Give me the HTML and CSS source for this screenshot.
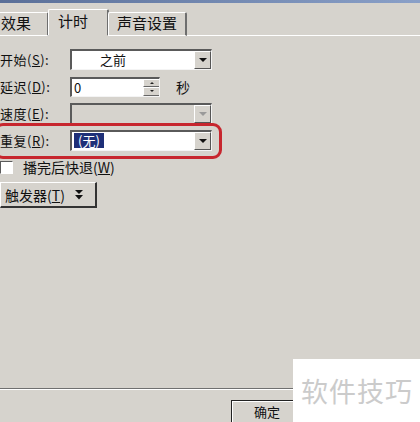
FILE: index.html
```html
<!DOCTYPE html>
<html lang="zh-CN">
<head>
    <meta charset="UTF-8">
    <title>计时</title>
    <link rel="stylesheet" href="styles.css">
</head>
<body>

<div class="titlebar"></div>

<div class="tabs">
    <div class="tab tab-first">效果</div>
    <div class="tab tab-active">计时</div>
    <div class="tab">声音设置</div>
    <div class="tab-rest"></div>
</div>

<div class="panel">
    <div class="row">
        <label class="label">开始(<u>S</u>):</label>
        <div class="combo">
            <span class="combo-text centered">之前</span>
            <span class="drop"><span class="arrow"></span></span>
        </div>
    </div>

    <div class="row">
        <label class="label">延迟(<u>D</u>):</label>
        <div class="spin">
            <span class="spin-text">0</span>
            <span class="spin-btns">
                <span class="spin-btn"><span class="arrow-up"></span></span>
                <span class="spin-btn"><span class="arrow-small"></span></span>
            </span>
        </div>
        <span class="unit">秒</span>
    </div>

    <div class="row">
        <label class="label">速度(<u>E</u>):</label>
        <div class="combo disabled">
            <span class="combo-text"></span>
            <span class="drop"><span class="arrow"></span></span>
        </div>
    </div>

    <div class="row">
        <label class="label">重复(<u>R</u>):</label>
        <div class="combo">
            <span class="combo-text"><span class="selected">(无)</span></span>
            <span class="drop"><span class="arrow"></span></span>
        </div>
        <div class="highlight"></div>
    </div>

    <div class="check-row">
        <span class="checkbox"></span>
        <span>播完后快退(<u>W</u>)</span>
    </div>

    <button class="trigger">
        <span>触发器(<u>T</u>)</span>
        <svg width="8" height="10" viewBox="0 0 8 10">
            <path d="M0 0h8L4 4z M0 5h8L4 9.5z" fill="#111"/>
        </svg>
    </button>
</div>

<div class="footer">
    <div class="separator"></div>
    <div class="buttons">
        <button class="ok">确定</button>
    </div>
</div>

<div class="watermark">软件技巧</div>

</body>
</html>
```

FILE: styles.css
```css
body {
    margin: 0;
    width: 420px;
    height: 422px;
    overflow: hidden;
    background-color: #d6d3cd;
    font-family: "Noto Sans CJK SC", "DejaVu Sans", sans-serif;
    font-size: 13px;
    color: #111;
    display: flex;
    flex-direction: column;
    position: relative;
}

.titlebar {
    height: 3px;
    background: linear-gradient(to right, #5a6f98, #8aa0c8);
}

/* Tabs */
.tabs {
    display: flex;
    align-items: flex-end;
    height: 33px;
}

.tab {
    height: 22px;
    line-height: 20px;
    padding: 0 8px;
    border-top: 1px solid #fff;
    border-left: 1px solid #fff;
    border-right: 2px solid #6e6e6e;
    border-bottom: 1px solid #fff;
    border-radius: 2px 2px 0 0;
    font-size: 15px;
}

.tab-first {
    margin-left: -4px;
    width: 38px;
    padding-left: 4px;
}

.tab-active {
    height: 25px;
    line-height: 22px;
    width: 40px;
    padding: 0 9px;
    border-bottom-color: transparent;
    margin-left: -1px;
    margin-right: -1px;
}

.tab-rest {
    flex: 1;
    border-bottom: 1px solid #fff;
}

/* Panel */
.panel {
    display: flex;
    flex-direction: column;
    gap: 6px;
    padding-top: 13px;
}

.row {
    display: flex;
    align-items: center;
    height: 21px;
    position: relative;
}

.label {
    width: 70px;
    flex-shrink: 0;
    font-size: 13px;
    letter-spacing: 0.5px;
}

.combo {
    width: 142px;
    height: 21px;
    box-sizing: border-box;
    background: #fff;
    border-top: 2px solid #5a5a5a;
    border-left: 2px solid #5a5a5a;
    border-right: 1px solid #f4f4f4;
    border-bottom: 1px solid #f4f4f4;
    display: flex;
}

.combo-text {
    flex: 1;
    padding-left: 2px;
    line-height: 18px;
    font-size: 13px;
}

.combo-text.centered {
    padding-left: 28px;
}

.selected {
    background: #1e2f78;
    color: #fff;
    padding: 0 4px;
    display: inline-block;
    line-height: 15px;
    margin-top: 1px;
}

.drop {
    width: 17px;
    background: #d6d3cd;
    border-top: 1px solid #fff;
    border-left: 1px solid #fff;
    border-right: 1px solid #555;
    border-bottom: 1px solid #555;
    box-sizing: border-box;
    display: flex;
    align-items: center;
    justify-content: center;
}

.arrow {
    width: 0;
    height: 0;
    border-left: 4px solid transparent;
    border-right: 4px solid transparent;
    border-top: 4px solid #111;
}

.disabled .combo-text {
    background: #d6d3cd;
}

.disabled .arrow {
    border-top-color: #9a9a9a;
}

.spin {
    width: 90px;
    height: 20px;
    box-sizing: border-box;
    background: #fff;
    border-top: 2px solid #5a5a5a;
    border-left: 2px solid #5a5a5a;
    border-right: 1px solid #f4f4f4;
    border-bottom: 1px solid #f4f4f4;
    display: flex;
}

.spin-text {
    flex: 1;
    padding-left: 2px;
    line-height: 17px;
}

.spin-btns {
    width: 16px;
    display: flex;
    flex-direction: column;
}

.spin-btn {
    flex: 1;
    background: #d6d3cd;
    border-top: 1px solid #fff;
    border-left: 1px solid #fff;
    border-bottom: 1px solid #666;
    display: flex;
    align-items: center;
    justify-content: center;
}

.arrow-up {
    border-left: 2px solid transparent;
    border-right: 2px solid transparent;
    border-bottom: 2px solid #222;
}

.arrow-small {
    border-left: 2px solid transparent;
    border-right: 2px solid transparent;
    border-top: 2px solid #222;
}

.unit {
    margin-left: 16px;
    font-size: 14px;
}

.highlight {
    position: absolute;
    left: -6px;
    top: -7px;
    width: 222px;
    height: 30px;
    border: 3px solid #c7262e;
    border-radius: 9px;
}

.check-row {
    display: flex;
    align-items: center;
    gap: 10px;
    height: 16px;
    margin-top: 2px;
    font-size: 14px;
}

.checkbox {
    width: 11px;
    height: 11px;
    background: #fff;
    border-top: 1px solid #5a5a5a;
    border-left: 1px solid #5a5a5a;
    border-right: 1px solid #fff;
    border-bottom: 1px solid #fff;
}

.trigger {
    align-self: flex-start;
    width: 97px;
    height: 26px;
    margin-top: 1px;
    background: #d6d3cd;
    font-family: inherit;
    font-size: 14px;
    color: #111;
    border-top: 1px solid #fff;
    border-left: 1px solid #fff;
    border-right: 2px solid #333;
    border-bottom: 2px solid #333;
    padding: 0 0 0 4px;
    display: flex;
    align-items: center;
    gap: 10px;
}

/* Footer */
.footer {
    margin-top: auto;
    display: flex;
    flex-direction: column;
}

.separator {
    width: 293px;
    border-top: 1px solid #707070;
    border-bottom: 1px solid #fff;
}

.buttons {
    display: flex;
    padding: 10px 0 0 231px;
}

.ok {
    width: 72px;
    height: 22px;
    background: #d6d3cd;
    font-family: inherit;
    font-size: 13px;
    color: #111;
    border: 1px solid #222;
    border-bottom: none;
    box-shadow: inset 1px 1px 0 #fff;
    padding: 0;
}

.watermark {
    position: absolute;
    left: 293px;
    top: 359px;
    width: 127px;
    height: 63px;
    background: #fff;
    color: #cbcbcb;
    font-size: 27px;
    line-height: 63px;
    padding-left: 8px;
    box-sizing: border-box;
    letter-spacing: 1px;
}
```
